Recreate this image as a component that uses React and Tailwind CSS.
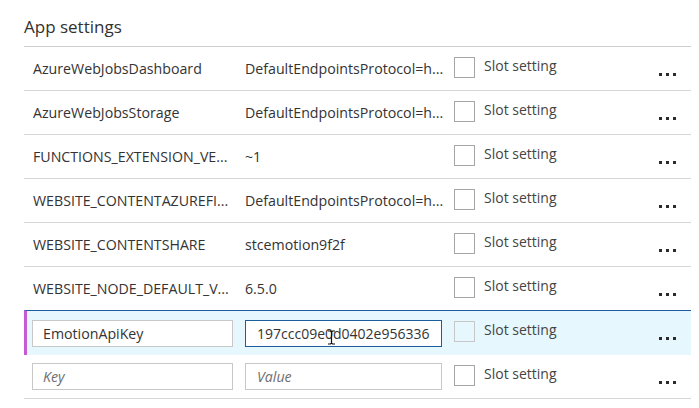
const settings = [
  { key: "AzureWebJobsDashboard", value: "DefaultEndpointsProtocol=h..." },
  { key: "AzureWebJobsStorage", value: "DefaultEndpointsProtocol=h..." },
  { key: "FUNCTIONS_EXTENSION_VE...", value: "~1" },
  { key: "WEBSITE_CONTENTAZUREFI...", value: "DefaultEndpointsProtocol=h..." },
  { key: "WEBSITE_CONTENTSHARE", value: "stcemotion9f2f" },
  { key: "WEBSITE_NODE_DEFAULT_V...", value: "6.5.0" },
];

function Dots() {
  return (
    <div className="flex gap-[4px] pt-[26px]">
      <span className="h-[3px] w-[3px] bg-[#2b2b2b]" />
      <span className="h-[3px] w-[3px] bg-[#2b2b2b]" />
      <span className="h-[3px] w-[3px] bg-[#2b2b2b]" />
    </div>
  );
}

function SlotSetting({ muted }) {
  return (
    <div className="flex w-[205px] items-start gap-[9px] pt-[10px]">
      <span
        className={`h-[21px] w-[21px] border ${
          muted ? "border-[#c8c8c8]" : "border-[#a6a6a6] bg-white"
        }`}
      />
      <span className="text-[14px] leading-[18px] text-[#444]">Slot setting</span>
    </div>
  );
}

export default function App() {
  return (
    <div className="h-[408px] w-[699px] bg-white pl-6 pr-2 font-['Open_Sans',sans-serif] text-[#333]">
      <h2 className="h-[47px] border-b border-[#cfcfcf] pt-[16px] text-[17px] leading-[22px] text-[#323130]">
        App settings
      </h2>

      {settings.map((s) => (
        <div key={s.key} className="flex h-[44px] border-b border-[#d6d6d6]">
          <div className="flex w-[221px] items-center pl-[9px] text-[14.2px] whitespace-nowrap">
            {s.key}
          </div>
          <div className="flex w-[209px] items-center text-[14.2px] whitespace-nowrap">
            {s.value}
          </div>
          <SlotSetting />
          <Dots />
        </div>
      ))}

      <div className="relative -mt-px flex h-[45px] border-t border-l-[3px] border-t-[#1c5d9c] border-l-[#c45ad6] bg-[#e6f7fd]">
        <div className="flex w-[218px] items-center pl-[5px]">
          <input
            readOnly
            value="EmotionApiKey"
            className="h-[27px] w-[201px] border border-[#c8c8c8] bg-white px-[10px] text-[14.2px] text-[#333] outline-none"
          />
        </div>
        <div className="relative flex w-[209px] items-center">
          <input
            readOnly
            value="197ccc09e0d0402e956336"
            className="h-[27px] w-[197px] border border-[#1c5d9c] bg-white pl-[11px] pr-[1px] text-[14px] text-[#333] outline-none"
          />
          <svg
            className="absolute left-[82px] top-[19px]"
            width="9"
            height="15"
            viewBox="0 0 9 15"
          >
            <path
              d="M1 1h2.5l1 1 1-1H8M4.5 2v11M1 14h2.5l1-1 1 1H8"
              fill="none"
              stroke="#111"
              strokeWidth="1.2"
            />
          </svg>
        </div>
        <SlotSetting muted />
        <Dots />
      </div>

      <div className="flex h-[44px] border-b border-[#d6d6d6]">
        <div className="flex w-[221px] items-center pl-[8px]">
          <input
            placeholder="Key"
            className="h-[27px] w-[201px] border border-[#c8c8c8] bg-white px-[10px] text-[14.2px] italic outline-none placeholder:text-[#6e6e6e]"
          />
        </div>
        <div className="flex w-[209px] items-center">
          <input
            placeholder="Value"
            className="h-[27px] w-[197px] border border-[#c8c8c8] bg-white px-[11px] text-[14.2px] italic outline-none placeholder:text-[#6e6e6e]"
          />
        </div>
        <SlotSetting />
        <Dots />
      </div>
    </div>
  );
}
